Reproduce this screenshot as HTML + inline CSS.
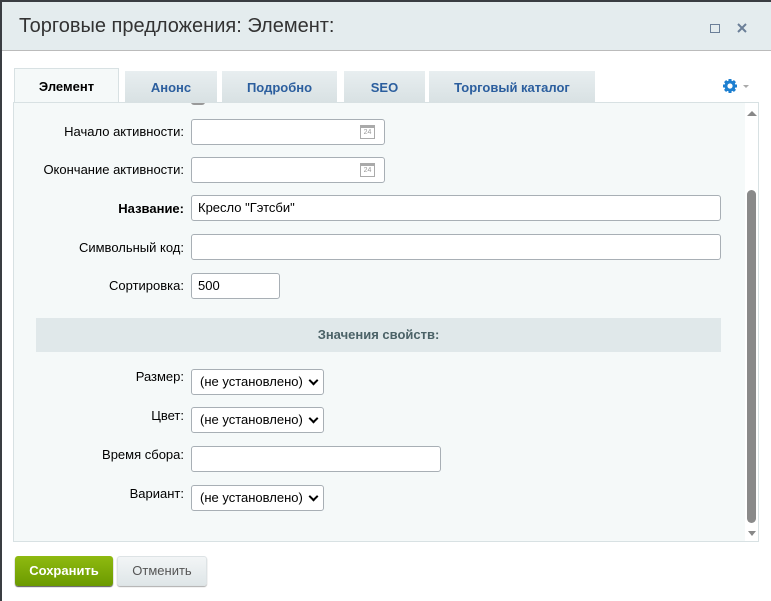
<!DOCTYPE html>
<html><head><meta charset="utf-8"><style>
*{box-sizing:border-box;margin:0;padding:0}
body{width:771px;height:601px;background:#3a3d42;font-family:"Liberation Sans",Arial,sans-serif;font-size:13px;position:relative;overflow:hidden;color:#000}
.dlg{position:absolute;left:2px;top:2px;width:769px;height:599px;background:#fff}
.hdr{position:absolute;left:0;top:0;width:769px;height:49px;background:#e4ecee;border-bottom:1px solid #bbb}
.ttl{position:absolute;left:17px;top:13px;font-size:20px;color:#333}
.a{position:absolute}
.tab{position:absolute;top:69px;height:34px;background:linear-gradient(#e8eef0,#d7e0e2);font-weight:bold;color:#2b5e9e;text-align:center;line-height:33px;font-size:13px}
.panel{position:absolute;left:13px;top:102px;width:746px;height:440px;background:#f5f9f9;border:1px solid #d8e1e3;overflow:hidden}
.lbl{position:absolute;right:587px;text-align:right;font-size:13px;color:#000;white-space:nowrap}
.in{position:absolute;left:191px;height:26px;background:#fff;border:1px solid #a8afb5;border-radius:3px;font-size:13px;line-height:24px;padding-left:6px}
.sel{position:absolute;left:191px;width:133px;height:26px;background:#fff;border:1px solid #a8afb5;border-radius:3px;font-size:13px;line-height:24px;padding-left:8px}
.sel:after{content:"";position:absolute;right:6px;top:7px;width:5px;height:5px;border-right:2px solid #000;border-bottom:2px solid #000;transform:rotate(45deg)}
.cal{position:absolute;right:9px;top:5px;width:15px;height:14px;border:1px solid #aaa;border-top:3px solid #aaa;font-size:7px;line-height:9px;text-align:center;color:#999}
</style></head><body>
<div class="dlg">
<div class="hdr"><div class="ttl">Торговые предложения: Элемент:</div>
<div class="a" style="left:708px;top:22px;width:10px;height:9px;border:1.5px solid #6b7f98"></div>
<svg class="a" style="left:735px;top:21px" width="10" height="10"><path d="M1 1L9 9M9 1L1 9" stroke="#6b7f98" stroke-width="2"/></svg>
</div>
<div class="tab" style="left:12px;top:66px;width:105px;height:37px;background:#f5f9f9;color:#000;border:1px solid #d8e1e3;border-bottom:none;line-height:36px">Элемент</div>
<div class="tab" style="left:123px;width:92px">Анонс</div>
<div class="tab" style="left:220px;width:115px">Подробно</div>
<div class="tab" style="left:342px;width:81px">SEO</div>
<div class="tab" style="left:427px;width:166px">Торговый каталог</div>
<svg class="a" style="left:721px;top:77px" width="14" height="14" viewBox="0 0 14 14"><g fill="#1d7fd0"><rect x="5.5" y="0" width="3" height="14"/><rect x="0" y="5.5" width="14" height="3"/><rect x="5.5" y="0" width="3" height="14" transform="rotate(45 7 7)"/><rect x="5.5" y="0" width="3" height="14" transform="rotate(-45 7 7)"/><circle cx="7" cy="7" r="5.5"/></g><circle cx="7" cy="7" r="2.6" fill="#fff"/></svg>
<div class="a" style="left:741px;top:83px;border:3px solid transparent;border-top:3px solid #aaa"></div>
</div>
<div class="panel">
<div class="a" style="left:177px;top:-2px;width:14px;height:4px;background:#999;border-radius:0 0 3px 3px"></div>
<div class="a" style="left:731px;top:0;width:14px;height:440px;background:#fff"></div>
<div class="a" style="left:733px;top:8px;border:5px solid transparent;border-bottom:5px solid #888;border-top:none"></div>
<div class="a" style="left:733px;top:87px;width:9px;height:333px;background:#8a8a8a;border-radius:5px"></div>
<div class="a" style="left:734px;top:428px;border:4px solid transparent;border-top:5px solid #888"></div>
</div>
<div class="lbl" style="top:124px">Начало активности:</div>
<div class="in" style="top:119px;width:194px"><div class="cal">24</div></div>
<div class="lbl" style="top:162px">Окончание активности:</div>
<div class="in" style="top:157px;width:194px"><div class="cal">24</div></div>
<div class="lbl" style="top:201px;font-weight:bold">Название:</div>
<div class="in" style="top:195px;width:530px">Кресло "Гэтсби"</div>
<div class="lbl" style="top:240px">Символьный код:</div>
<div class="in" style="top:234px;width:530px"></div>
<div class="lbl" style="top:278px">Сортировка:</div>
<div class="in" style="top:273px;width:89px">500</div>
<div class="a" style="left:36px;top:318px;width:685px;height:34px;background:#e0e8ea;font-weight:bold;color:#4b6267;text-align:center;line-height:33px">Значения свойств:</div>
<div class="lbl" style="top:369px">Размер:</div>
<div class="sel" style="top:369px">(не установлено)</div>
<div class="lbl" style="top:408px">Цвет:</div>
<div class="sel" style="top:407px">(не установлено)</div>
<div class="lbl" style="top:447px">Время сбора:</div>
<div class="in" style="top:446px;width:250px"></div>
<div class="lbl" style="top:486px">Вариант:</div>
<div class="sel" style="top:485px">(не установлено)</div>
<div class="a" style="left:15px;top:556px;width:98px;height:30px;background:linear-gradient(#8fba10,#6b9a00);border-radius:3px;color:#fff;font-weight:bold;text-align:center;line-height:29px;box-shadow:0 1px 1px #555">Сохранить</div>
<div class="a" style="left:117px;top:556px;width:90px;height:30px;background:linear-gradient(#f2f5f6,#dfe6e8);border-radius:3px;border:1px solid #dde3e5;color:#555;text-align:center;line-height:28px;box-shadow:0 1px 1px #aaa">Отменить</div>
</body></html>
